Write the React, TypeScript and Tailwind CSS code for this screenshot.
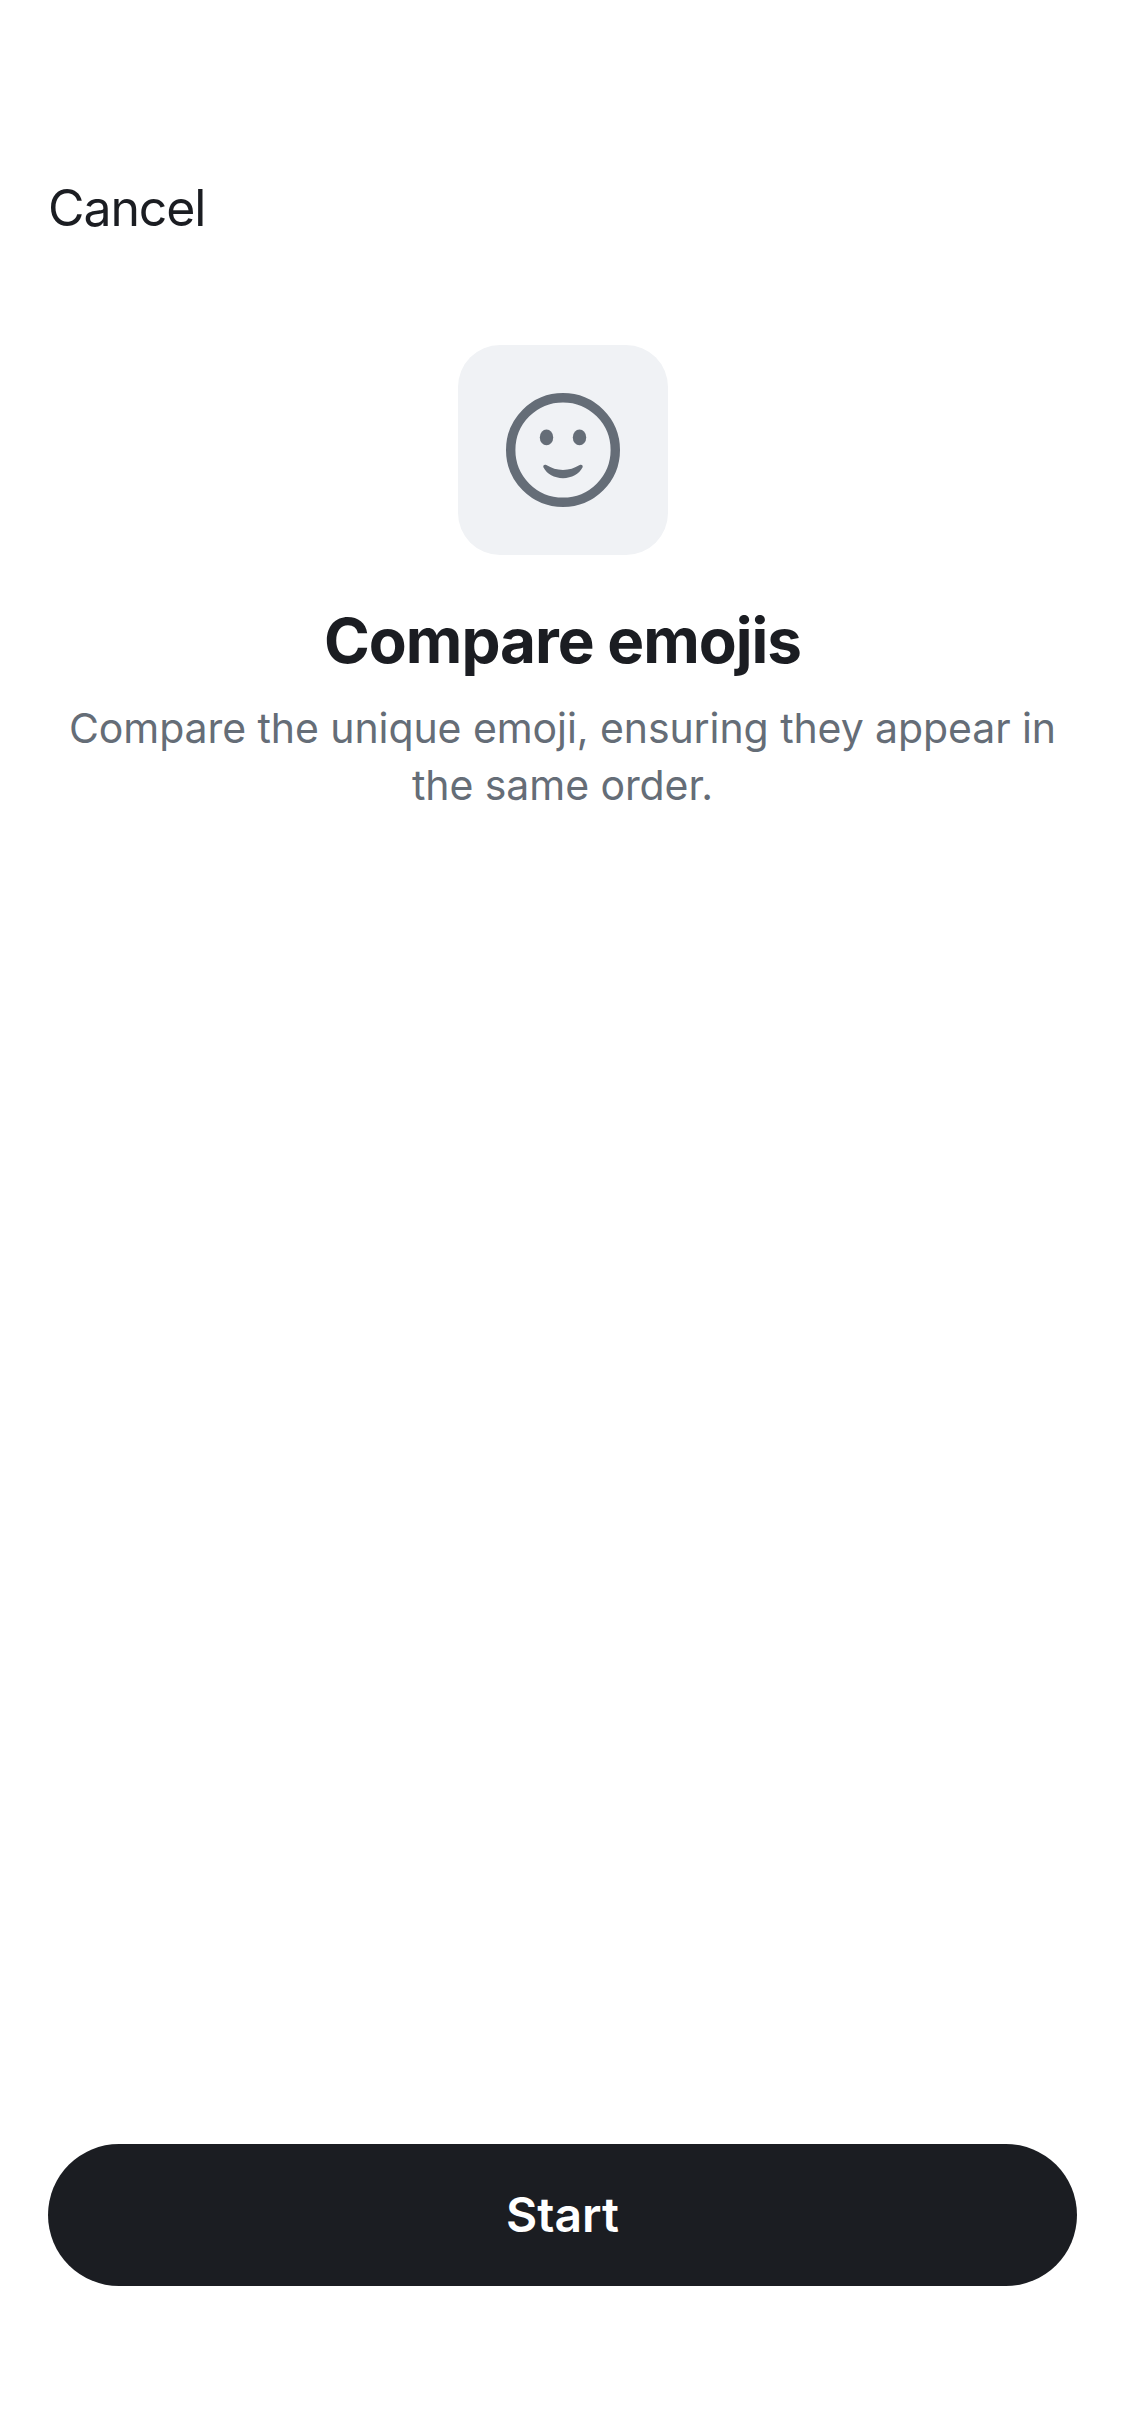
function SmileIcon() {
  return (
    <svg className="size-[114px]" viewBox="0 0 114 114" fill="none" aria-hidden="true">
      <circle cx="57" cy="57" r="52.3" stroke="currentColor" strokeWidth="9.4" />
      <ellipse cx="40.5" cy="44.4" rx="6.7" ry="7.9" fill="currentColor" />
      <ellipse cx="73.5" cy="44.4" rx="6.7" ry="7.9" fill="currentColor" />
      <path
        d="M40.3 72.1C45.5 75.3 50.8 77 57 77C63.2 77 68.5 75.3 73.7 72.1C75.6 71.2 77.4 72.4 76.5 74.6C73 81.2 65.8 85.2 57 85.2C48.2 85.2 41 81.2 37.5 74.6C36.6 72.4 38.4 71.2 40.3 72.1Z"
        fill="currentColor"
      />
    </svg>
  );
}

export default function App() {
  return (
    <main className="flex h-[2436px] w-[1125px] flex-col bg-white px-12 pb-[150px] font-['Inter',sans-serif] text-[#1b1d22]">
      <header className="flex h-[345px] items-start pt-[176px]">
        <button className="text-[50px] leading-[64px] tracking-[-1.1px]">Cancel</button>
      </header>

      <section className="flex flex-1 flex-col items-center text-center">
        <div className="flex size-[210px] items-center justify-center rounded-[42px] bg-[#f0f2f5] text-[#656d77]">
          <SmileIcon />
        </div>
        <h1 className="mt-[44px] text-[62px] leading-[84px] font-bold tracking-[-1.03px]">Compare emojis</h1>
        <p className="mt-[17px] text-[41px] leading-[57px] tracking-[-0.08px] whitespace-nowrap text-[#656d77]">
          Compare the unique emoji, ensuring they appear in
          <br />
          the same order.
        </p>
      </section>

      <button className="h-[142px] w-full rounded-full bg-[#1b1d22] text-[48px] leading-[60px] font-semibold text-white">
        Start
      </button>
    </main>
  );
}
